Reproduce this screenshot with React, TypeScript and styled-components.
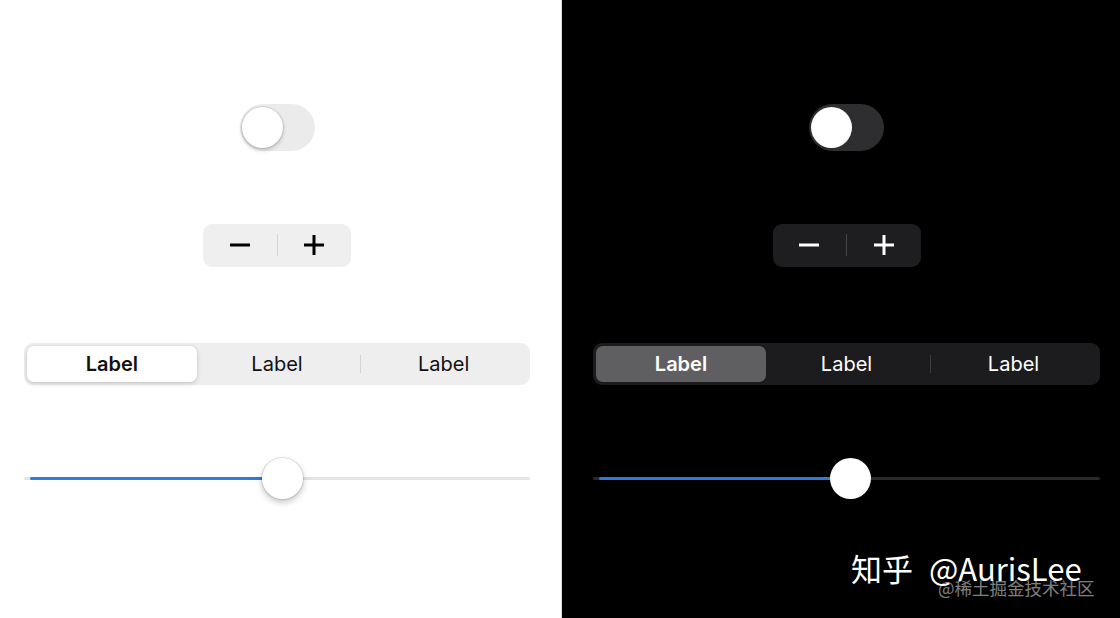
import React from 'react';
import styled, { createGlobalStyle } from 'styled-components';

const GlobalStyle = createGlobalStyle`
html, body {
  margin: 0;
  padding: 0;
  width: 1120px;
  height: 618px;
  overflow: hidden;
  background: #000;
}
* { box-sizing: border-box; }
`;

type Mode = { $dark?: boolean };

const Page = styled.main`
position: relative;
display: flex;
width: 1120px;
height: 618px;
font-family: Inter, "Noto Sans", sans-serif;
`;

const Panel = styled.section<Mode & { $pl: number; $pr: number; $w: number }>`
width: ${p => p.$w}px;
height: 618px;
padding: 68px ${p => p.$pr}px 0 ${p => p.$pl}px;
background: ${p => (p.$dark ? '#000' : '#fff')};
border-right: ${p => (p.$dark ? 'none' : '1px solid #dcdcdc')};
display: grid;
grid-template-rows: repeat(4, 118px);
align-items: center;
justify-items: center;
`;

const Track = styled.div<Mode>`
width: 75px;
height: 47px;
border-radius: 24px;
padding: 3px 2px;
background: ${p => (p.$dark ? '#2e2e31' : '#ebebec')};
`;

const Knob = styled.div<Mode>`
width: 41px;
height: 41px;
border-radius: 50%;
background: #fff;
box-shadow: ${p => (p.$dark ? 'none' : '0 0 0 1px rgba(0,0,0,0.08), 0 2px 4px rgba(0,0,0,0.22)')};
`;

const Stepper = styled.div<Mode>`
width: 148px;
height: 43px;
border-radius: 9px;
background: ${p => (p.$dark ? '#1e1e20' : '#efeff0')};
display: grid;
grid-template-columns: 1fr 1px 1fr;
align-items: center;
justify-items: center;
color: ${p => (p.$dark ? '#fff' : '#000')};
`;

const StepDivider = styled.span<Mode>`
width: 1px;
height: 22px;
background: ${p => (p.$dark ? '#454547' : '#d2d2d4')};
`;

const Segmented = styled.div<Mode>`
width: 100%;
height: 42px;
margin-top: 2px;
border-radius: 9px;
padding: 3px;
background: ${p => (p.$dark ? '#1c1c1e' : '#eeeeef')};
display: grid;
grid-template-columns: 1fr 1fr 1fr;
align-items: center;
`;

const Segment = styled.div<Mode & { $active?: boolean; $sep?: boolean }>`
position: relative;
height: 36px;
display: flex;
align-items: center;
justify-content: center;
border-radius: 7px;
font-size: 20px;
font-weight: ${p => (p.$active ? 600 : 400)};
color: ${p => (p.$dark ? '#fff' : '#111')};
background: ${p => (p.$active ? (p.$dark ? '#5f5f62' : '#fff') : 'transparent')};
box-shadow: ${p => (p.$active && !p.$dark ? '0 2px 5px rgba(0,0,0,0.14), 0 0 0 1px rgba(0,0,0,0.03)' : 'none')};
margin-right: ${p => (p.$active ? '-3px' : '0')};
${p => p.$sep && `
  &::before {
    content: '';
    position: absolute;
    left: 0;
    top: 9px;
    width: 1px;
    height: 18px;
    background: ${p.$dark ? '#3f3f41' : '#d4d4d6'};
  }
`}
`;

const Slider = styled.div`
position: relative;
width: 100%;
height: 41px;
margin-bottom: 6px;
display: flex;
align-items: center;
`;

const Rail = styled.div<Mode>`
width: 100%;
height: 3px;
border-radius: 2px;
background: ${p => (p.$dark ? '#29292b' : '#e4e4e4')};
`;

const Fill = styled.div`
height: 100%;
margin-left: 6px;
border-radius: 2px;
background: #2c7be3;
`;

const Thumb = styled.div<Mode>`
position: absolute;
top: 0;
width: 41px;
height: 41px;
border-radius: 50%;
background: #fff;
box-shadow: ${p => (p.$dark ? 'none' : '0 0 0 1px rgba(0,0,0,0.1), 0 3px 6px rgba(0,0,0,0.25)')};
`;

const Watermark = styled.div`
position: absolute;
left: 851px;
top: 552px;
font-family: "Noto Sans CJK SC", "Noto Sans", sans-serif;
font-size: 31px;
line-height: 1;
word-spacing: 9px;
color: #fff;
white-space: nowrap;
`;

const SubMark = styled.div`
position: absolute;
left: 938px;
top: 579px;
font-family: "Noto Sans CJK SC", "Noto Sans", sans-serif;
font-size: 17.5px;
line-height: 1;
color: rgba(255,255,255,0.5);
white-space: nowrap;
`;

const Minus = () => (
  <svg width="22" height="22" viewBox="0 0 22 22">
    <path d="M1 11h20" stroke="currentColor" strokeWidth="3" strokeLinecap="butt" />
  </svg>
);

const Plus = () => (
  <svg width="22" height="22" viewBox="0 0 22 22">
    <path d="M1 11h20M11 1v20" stroke="currentColor" strokeWidth="3" strokeLinecap="butt" />
  </svg>
);

const Controls = ({ dark, value }: { dark?: boolean; value: number }) => {
  const left = value * (507 - 41);
  return (
    <>
      <Track $dark={dark}>
        <Knob $dark={dark} />
      </Track>
      <Stepper $dark={dark}>
        <Minus />
        <StepDivider $dark={dark} />
        <Plus />
      </Stepper>
      <Segmented $dark={dark}>
        <Segment $dark={dark} $active>Label</Segment>
        <Segment $dark={dark}>Label</Segment>
        <Segment $dark={dark} $sep>Label</Segment>
      </Segmented>
      <Slider>
        <Rail $dark={dark}>
          <Fill style={{ width: left + 20 - 6 }} />
        </Rail>
        <Thumb $dark={dark} style={{ left }} />
      </Slider>
    </>
  );
};

const App = () => (
  <Page>
    <GlobalStyle />
    <Panel $w={562} $pl={24} $pr={31}>
      <Controls value={0.51} />
    </Panel>
    <Panel $dark $w={558} $pl={31} $pr={20}>
      <Controls dark value={0.508} />
    </Panel>
    <Watermark>知乎 @AurisLee</Watermark>
    <SubMark>@稀土掘金技术社区</SubMark>
  </Page>
);

export default App;
